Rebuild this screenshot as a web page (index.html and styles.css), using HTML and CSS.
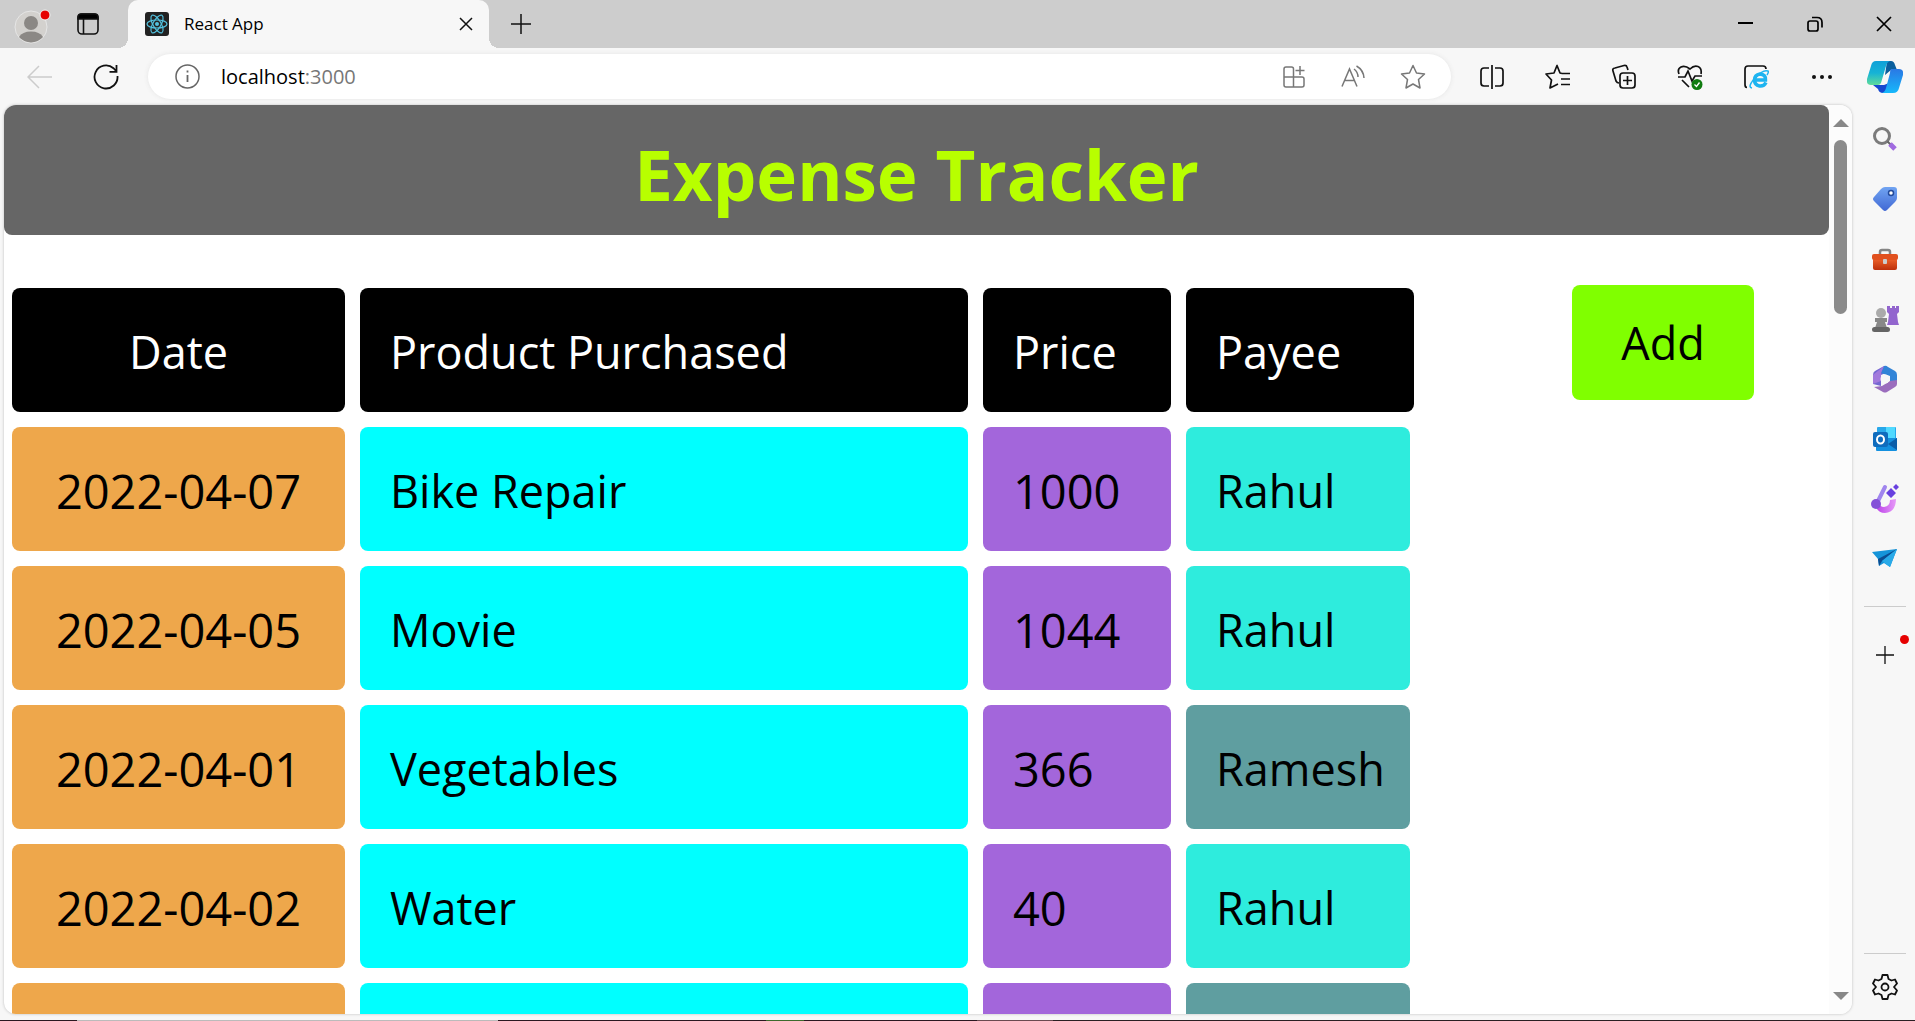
FILE: index.html
```html
<!DOCTYPE html>
<html lang="en">
<head>
<meta charset="utf-8">
<title>React App</title>
<link rel="stylesheet" href="styles.css">
</head>
<body>
<div class="browser">
  <header class="tabstrip">
    <button class="chrome-btn profile" aria-label="Profile">
      <svg width="38" height="40" viewBox="0 0 38 40"><circle cx="17" cy="23" r="16" fill="#d3d1ce" stroke="#e6e6e6"/><circle cx="17" cy="19" r="7" fill="#8b8885"/><path d="M5 33a13 9 0 0 1 24 0a16 16 0 0 1-24 0z" fill="#8b8885"/><circle cx="31" cy="11" r="5" fill="#e60000" stroke="#f3f3f3"/></svg>
    </button>
    <button class="chrome-btn workspaces" aria-label="Tab actions">
      <svg width="24" height="24" viewBox="0 0 24 24" fill="none" stroke="#111" stroke-width="1.6"><rect x="2" y="2" width="20" height="20" rx="4"/><path d="M2 7V5q0-3 3-3h14q3 0 3 3v2z" fill="#000"/><path d="M7.500 7v15"/></svg>
    </button>
    <div class="tab">
      <svg width="24" height="24" viewBox="0 0 24 24"><rect width="24" height="24" rx="3" fill="#222"/><g fill="none" stroke="#53c1de" stroke-width="1.200"><ellipse cx="12" cy="12" rx="10" ry="4"/><ellipse cx="12" cy="12" rx="10" ry="4" transform="rotate(60 12 12)"/><ellipse cx="12" cy="12" rx="10" ry="4" transform="rotate(120 12 12)"/></g><circle cx="12" cy="12" r="2" fill="#53c1de"/></svg>
      <span class="tab-title">React App</span>
      <button class="chrome-btn" aria-label="Close tab"><svg width="14" height="14" viewBox="0 0 14 14" stroke="#111" stroke-width="1.500"><path d="M1 1l12 12M13 1L1 13"/></svg></button>
    </div>
    <button class="chrome-btn new-tab" aria-label="New tab"><svg width="22" height="22" viewBox="0 0 22 22" stroke="#111" stroke-width="1.500"><path d="M11 1v20M1 11h20"/></svg></button>
    <div class="window-controls">
      <button class="chrome-btn" aria-label="Minimize"><svg width="16" height="16" viewBox="0 0 16 16" stroke="#000" stroke-width="2"><path d="M0 7h15"/></svg></button>
      <button class="chrome-btn" aria-label="Restore"><svg width="16" height="16" viewBox="0 0 16 16" fill="none" stroke="#000" stroke-width="1.700"><rect x="1" y="5" width="10" height="10" rx="2"/><path d="M5 1.500h5q5 0 5 5v5"/></svg></button>
      <button class="chrome-btn" aria-label="Close"><svg width="16" height="16" viewBox="0 0 16 16" stroke="#000" stroke-width="1.700"><path d="M1 1l14 14M15 1L1 15"/></svg></button>
    </div>
  </header>

  <nav class="toolbar" aria-label="Browser toolbar">
    <button class="chrome-btn back" aria-label="Back"><svg width="26" height="24" viewBox="0 0 26 24" fill="none" stroke="#ccc" stroke-width="1.500"><path d="M12 1L1 12l11 11M1 12h24"/></svg></button>
    <button class="chrome-btn reload" aria-label="Refresh"><svg width="26" height="26" viewBox="0 0 26 26" fill="none" stroke="#111" stroke-width="1.800"><path d="M24.500 12A11.500 11.500 0 1 1 20.500 4.200L23.500 7.500M23.500 1v6.800h-7"/></svg></button>
    <div class="address">
      <svg width="25" height="25" viewBox="0 0 25 25" fill="none" stroke="#666" stroke-width="1.500"><circle cx="12.500" cy="12.500" r="11.500"/><path d="M12.500 11v7M12.500 6.500v2" stroke-width="1.800"/></svg>
      <div class="url"><span class="host">localhost</span><span class="port">:3000</span></div>
      <button class="chrome-btn" aria-label="App available"><svg width="24" height="24" viewBox="0 0 24 24" fill="none" stroke="#777" stroke-width="1.500"><path d="M11.500 12V4q0-2-2-2H4Q2 2 2 4v16q0 2 2 2h16q2 0 2-2v-6q0-2-2-2H2M11.500 12v10M18 1v9M13.500 5.500h9"/></svg></button>
      <button class="chrome-btn" aria-label="Read aloud"><svg width="24" height="24" viewBox="0 0 24 24" fill="none" stroke="#777" stroke-width="1.500"><path d="M1 21.500L8.500 4 16 21.500M4 15.500h9M13 4q4 3 4 8M15.500 1q7 4 7.500 12"/></svg></button>
      <button class="chrome-btn" aria-label="Add to favorites"><svg width="26" height="26" viewBox="0 0 26 26" fill="none" stroke="#777" stroke-width="1.500" stroke-linejoin="round"><path d="M13 1.500l3.500 7.500 8 1-6 5.500 1.500 8.500-7-4-7 4 1.500-8.500-6-5.500 8-1z"/></svg></button>
    </div>
    <div class="tools">
      <button class="chrome-btn" aria-label="Split screen"><svg width="26" height="26" viewBox="0 0 26 26" fill="none" stroke="#111" stroke-width="1.700"><path d="M13 1v24M10 4H5Q2 4 2 7v12q0 3 3 3h5M16 4h5q3 0 3 3v12q0 3-3 3h-5"/></svg></button>
      <button class="chrome-btn" aria-label="Favorites"><svg width="26" height="26" viewBox="0 0 26 26" fill="none" stroke="#111" stroke-width="1.700" stroke-linejoin="round"><path d="M17 9.500l-2-.5-3-7.500L9 9l-8 1 5.500 6L5 24l8-4M17 9.500h8M16 15h9M16 20.500h9"/></svg></button>
      <button class="chrome-btn" aria-label="Collections"><svg width="26" height="26" viewBox="0 0 26 26" fill="none" stroke="#111" stroke-width="1.700"><rect x="9" y="9" width="15" height="15" rx="3"/><path d="M16.500 12v9M12 16.500h9M17 6l-1-3q-.5-2-3-1.500L4 4q-3 .5-2 3l3 10q1 2 3 2"/></svg></button>
      <button class="chrome-btn" aria-label="Browser essentials"><svg width="26" height="26" viewBox="0 0 26 26" fill="none" stroke="#111" stroke-width="1.700"><path d="M2 10Q0 5 4 3t9 2q4-4 8-2.500T24 10M1 13h7l3-6 4 10 3-5h7M5 16l7 7"/><circle cx="20" cy="20.500" r="5.500" fill="#107c10" stroke="none"/><path d="M17.500 20.500l2 2 3-4" stroke="#fff" stroke-width="1.300"/></svg></button>
      <button class="chrome-btn" aria-label="Internet Explorer mode"><svg width="26" height="26" viewBox="0 0 26 26" fill="none"><path d="M4 23.500q-2 0-2-3V5q0-3 3-3h15q3 0 3 3" stroke="#111" stroke-width="1.700"/><path d="M23 18.500q-2 4-6.500 3.500-5-1-5-6t5.500-6q6 .5 5.500 6H12" stroke="#1eb4f0" stroke-width="3.500"/><path d="M9 24Q4 23 12 14T25 7q1 1-1 4" stroke="#1eb4f0" stroke-width="1.500"/></svg></button>
      <button class="chrome-btn" aria-label="Settings and more"><svg width="26" height="26" viewBox="0 0 26 26"><g fill="#111"><circle cx="5" cy="13" r="2"/><circle cx="13" cy="13" r="2"/><circle cx="21" cy="13" r="2"/></g></svg></button>
    </div>
    <button class="chrome-btn copilot" aria-label="Copilot"><svg width="36" height="34" viewBox="0 0 36 34"><defs><linearGradient id="cp1" x2="0" y2="1"><stop offset="0" stop-color="#0fa0d8"/><stop offset=".5" stop-color="#16b3d6"/><stop offset="1" stop-color="#5fdc9a"/></linearGradient><linearGradient id="cp2" x2="0" y2="1"><stop offset="0" stop-color="#2a78e4"/><stop offset="1" stop-color="#16b8fb"/></linearGradient></defs><path d="M20 1h4q3 0 4 4l2 5h-6l-6 5z" fill="#0a5f9e"/><path d="M6 25h11l5-2-4 10h-2q-4 0-5-4z" fill="#1548d0"/><path d="M9 1h14q-3 1-4 5l-5 17q-1 2-3 2H4q-5 0-4-6L4 6Q5 1 9 1z" fill="url(#cp1)"/><path d="M24 9h8q5 0 4 6l-4 13q-1 5-6 5H15q3-1 4-5l4-15q0-3 1-4z" fill="url(#cp2)"/></svg></button>
  </nav>

  <div class="workspace">
    <div class="viewport">
      <main class="page">
        <h1 class="title">Expense Tracker</h1>
        <div class="content">
          <table class="expenses">
            <thead><tr><th class="date">Date</th><th>Product Purchased</th><th>Price</th><th>Payee</th></tr></thead>
            <tbody>
              <tr><td class="date">2022-04-07</td><td class="product">Bike Repair</td><td class="price">1000</td><td class="rahul">Rahul</td></tr>
              <tr><td class="date">2022-04-05</td><td class="product">Movie</td><td class="price">1044</td><td class="rahul">Rahul</td></tr>
              <tr><td class="date">2022-04-01</td><td class="product">Vegetables</td><td class="price">366</td><td class="ramesh">Ramesh</td></tr>
              <tr><td class="date">2022-04-02</td><td class="product">Water</td><td class="price">40</td><td class="rahul">Rahul</td></tr>
              <tr><td class="date"></td><td class="product"></td><td class="price"></td><td class="ramesh"></td></tr>
            </tbody>
          </table>
          <button class="add">Add</button>
        </div>
      </main>
      <div class="scrollbar" aria-hidden="true"><span class="arrow-up"></span><span class="thumb"></span><span class="arrow-down"></span></div>
    </div>
    <aside class="sidebar" aria-label="Sidebar">
      <button class="chrome-btn" aria-label="Search"><svg width="26" height="26" viewBox="0 0 26 26" fill="none"><circle cx="10" cy="10" r="7.500" stroke="#7b7b7b" stroke-width="3"/><path d="M15.500 15.500l3 3" stroke="#666" stroke-width="2"/><path d="M18 18l5 5" stroke="#a06be0" stroke-width="5"/></svg></button>
      <button class="chrome-btn" aria-label="Shopping"><svg width="26" height="26" viewBox="0 0 26 26"><defs><linearGradient id="tag" x2="0" y2="1"><stop stop-color="#71a4f2"/><stop offset="1" stop-color="#4168d4"/></linearGradient></defs><path d="M13 1h9q3 0 3 3v8q0 2-2 4l-8 8q-2 2-4 0l-9-9q-2-2 0-4l7-8q2-2 4-2z" fill="url(#tag)"/><circle cx="19" cy="7" r="2.500" fill="#fff" stroke="#234a9b" stroke-width="1.500"/></svg></button>
      <button class="chrome-btn" aria-label="Tools"><svg width="28" height="26" viewBox="0 0 28 26"><defs><linearGradient id="box" x2="0" y2="1"><stop stop-color="#f0652b"/><stop offset="1" stop-color="#bd300b"/></linearGradient></defs><path d="M9 9V6q0-2 2-2h6q2 0 2 2v3" fill="none" stroke="#858585" stroke-width="2.500"/><rect x="2" y="12" width="24" height="12" rx="2" fill="url(#box)"/><rect x="1" y="8" width="26" height="6" rx="2" fill="#e1501e"/><rect x="12" y="13" width="4" height="5" rx="1" fill="#ccc"/></svg></button>
      <button class="chrome-btn" aria-label="Games"><svg width="28" height="28" viewBox="0 0 28 28"><path d="M16 1h3v2h2V1h3v2h1V1h3v6l-2 2 1 8 1 3H16l1-3 1-8-2-2z" fill="#9265ce"/><circle cx="10" cy="8" r="5" fill="#aaa"/><path d="M4 13h12v4h-2l2 6H4l2-6H4z" fill="#888"/><rect x="1" y="22" width="18" height="5" rx="2.500" fill="#656565"/></svg></button>
      <button class="chrome-btn" aria-label="Microsoft 365"><svg width="26" height="28" viewBox="0 0 26 28"><path d="M12 1L3 6q-2 1-2 4v9l8 2V10l7-3z" fill="#7567d2"/><path d="M12 1q2-1 4 1l7 4q2 1 2 4v8l-7-2v-5L9 8z" fill="#3284d7"/><path d="M25 15v4q0 2-2 3l-8 5q-2 1-4 0l-9-5 8-1 8-5z" fill="#9b6dbd"/><path d="M12 1L9 8v8l-8 3V10z" fill="#a279dc"/><circle cx="13" cy="14" r="4.500" fill="#f7f7f7"/></svg></button>
      <button class="chrome-btn" aria-label="Outlook"><svg width="26" height="26" viewBox="0 0 26 26"><rect x="5" y="1" width="19" height="13" rx="1" fill="#28a8ea"/><path d="M14 1h9v11h-9z" fill="#50d9ff"/><path d="M4 12h21v12q0 1-1 1H5q-1 0-1-1z" fill="#1490df"/><path d="M25 12v12l-9-6z" fill="#0a5da8"/><rect x="1" y="6" width="15" height="15" rx="2" fill="#0f6cbd"/><ellipse cx="8.500" cy="13.500" rx="3.500" ry="4" fill="none" stroke="#fff" stroke-width="2"/></svg></button>
      <button class="chrome-btn" aria-label="Image Creator"><svg width="30" height="30" viewBox="0 0 30 30" fill="none"><defs><linearGradient id="brush" x2="1" y2="0"><stop stop-color="#b83be8"/><stop offset="1" stop-color="#e79af8"/></linearGradient></defs><path d="M5 20q2 9 10 9 11-1 11-14l-6 1q0 6-6 7-4 0-5-4z" fill="url(#brush)"/><path d="M15 3L7 19" stroke="#a085ee" stroke-width="4" stroke-linecap="round"/><circle cx="6" cy="20" r="5" fill="#8550d8"/><path d="M21 4l5 5-5 5-5-5zM26 0l3 3-3 3-3-3z" fill="#6840df"/></svg></button>
      <button class="chrome-btn" aria-label="Drop"><svg width="28" height="22" viewBox="0 0 28 22"><path d="M1 4l25-3-7 18-6-4-5 3-1-7z" fill="#1594d9"/><path d="M26 1L7 11l1 7 3-5z" fill="#0b4d91"/><path d="M26 1L11 13l8 6z" fill="#29aae8"/></svg></button>
      <hr class="divider">
      <button class="chrome-btn customize" aria-label="Customize"><svg width="20" height="20" viewBox="0 0 20 20" stroke="#111" stroke-width="1.300"><path d="M10 1v18M1 10h18"/></svg><span class="dot"></span></button>
      <hr class="divider bottom">
      <button class="chrome-btn" aria-label="Settings"><svg width="26" height="28" viewBox="0 0 26 28" fill="none" stroke="#111" stroke-width="1.800" stroke-linejoin="round"><path d="M10.500 2h5l1 4 3 1.500 3.500-1 2 4-3 3.500 3 3.500-2 4-3.500-1-3 1.500-1 4h-5l-1-4-3-1.500-3.500 1-2-4 3-3.500-3-3.500 2-4 3.500 1 3-1.500z"/><circle cx="13" cy="14" r="3.500"/></svg></button>
    </aside>
  </div>
  <div class="desktop-edge"></div>
</div>
</body>
</html>
```
FILE: styles.css
```css
* { box-sizing: border-box; }
body { margin: 0; font-family: "Segoe UI", "Open Sans", "Noto Sans", sans-serif; color: #000; }
svg { display: block; flex: none; }
button { font: inherit; color: inherit; }
.browser { display: flex; flex-direction: column; height: 100vh; overflow: hidden; background: #f7f7f7; }
.chrome-btn { display: flex; align-items: center; justify-content: center; padding: 0; border: 0; background: none; }

.tabstrip { display: flex; align-items: center; flex: none; height: 48px; background: #cdcdcd; }
.profile { margin-left: 14px; }
.workspaces { margin-left: 24px; }
.tab { position: relative; display: flex; align-items: center; width: 361px; height: 48px; margin-left: 28px; padding: 0 16px 0 17px; background: #f7f7f7; border-radius: 10px 10px 0 0; }
.tab::before, .tab::after { content: ""; position: absolute; bottom: 0; width: 10px; height: 10px; }
.tab::before { right: 100%; background: radial-gradient(circle at 0 0, #cdcdcd 10px, #f7f7f7 10px); }
.tab::after { left: 100%; background: radial-gradient(circle at 100% 0, #cdcdcd 10px, #f7f7f7 10px); }
.tab-title { flex: 1; margin-left: 15px; padding-bottom: 2px; font-size: 17px; }
.new-tab { margin-left: 21px; }
.window-controls { display: flex; gap: 53px; margin-left: auto; padding-right: 23px; }

.toolbar { display: flex; align-items: center; flex: none; height: 57px; }
.back { margin-left: 27px; }
.reload { margin-left: 40px; }
.address { display: flex; align-items: center; gap: 35px; flex: 1; height: 45px; margin-left: 29px; padding: 0 25px 0 27px; border-radius: 23px; background: #fff; box-shadow: 0 0 5px #e4e4e4; }
.url { flex: 1; margin-left: -14px; font-size: 20px; }
.port { color: #777; }
.tools { display: flex; gap: 40px; margin-left: 28px; }
.copilot { margin: 0 12px 0 32px; }

.workspace { display: flex; flex: 1; min-height: 0; }
.viewport { display: flex; flex: 1; min-width: 0; margin-left: 4px; overflow: hidden; border-radius: 12px; background: #fff; box-shadow: 0 0 3px #bbb; }
.page { flex: 1; min-width: 0; overflow: hidden; }
.title { margin: 0; padding: 19px 15px 11px; border-radius: 8px; background: #666; color: #b8ff00; font-size: 69px; line-height: 100px; text-align: center; }
.content { display: flex; align-items: flex-start; justify-content: space-between; padding: 50px 75px 0 8px; }
.expenses { display: block; margin-top: 3px; }
.expenses thead, .expenses tbody { display: grid; gap: 15px; }
.expenses tbody { margin-top: 15px; }
.expenses tr { display: grid; grid-template-columns: 333px 608px 188px 224px; column-gap: 15px; }
.expenses thead tr { grid-template-columns: 333px 608px 188px 228px; }
.expenses th, .expenses td { min-height: 124px; padding: 32px 30px 28px; border-radius: 8px; font-size: 45px; font-weight: 400; line-height: 64px; text-align: left; white-space: nowrap; }
.expenses th { background: #000; color: #fff; }
.expenses .date { text-align: center; }
td.date { background: #eea74b; }
td.product { background: #0ff; }
td.price { background: #a366db; }
td.rahul { background: #2eecdd; }
td.ramesh { background: #5f9ea0; }
.expenses td.date, .expenses td.price { font-size: 47px; }
.add { min-width: 182px; padding: 25px 40px; border: 0; border-radius: 8px; background: #80ff00; font-size: 45px; line-height: 65px; }

.scrollbar { display: flex; flex-direction: column; align-items: center; flex: none; width: 23px; padding: 14px 0; background: #fcfcfc; }
.arrow-up, .arrow-down { border: 8px solid transparent; }
.arrow-up { border-top: 0; border-bottom-color: #888; }
.arrow-down { margin-top: auto; border-bottom: 0; border-top-color: #888; }
.thumb { width: 13px; height: 174px; margin-top: 13px; border-radius: 7px; background: #8b8b8b; }

.sidebar { display: flex; flex-direction: column; align-items: center; flex: none; width: 63px; padding: 17px 0 0 2px; }
.sidebar .chrome-btn { flex: none; height: 34px; margin-bottom: 26px; }
.divider { flex: none; width: 42px; height: 1px; margin: 4px 0 31px; border: 0; background: #ccc; }
.sidebar .customize { position: relative; margin: 0; }
.dot { position: absolute; top: -3px; right: -14px; width: 9px; height: 9px; border-radius: 50%; background: #e60000; }
.bottom { margin: auto 0 16px; }
.sidebar .chrome-btn:last-child { margin-bottom: 10px; }
.desktop-edge { flex: none; height: 1px; margin-top: 6px; background: linear-gradient(90deg, #2a1720 4%, #bbb 4% 26%, #2a1720 26% 40%, #3c6a2c 40% 42%, #2a1720 42% 51%, #6a4a50 51% 55%, #2a1f22 55%); }
```
